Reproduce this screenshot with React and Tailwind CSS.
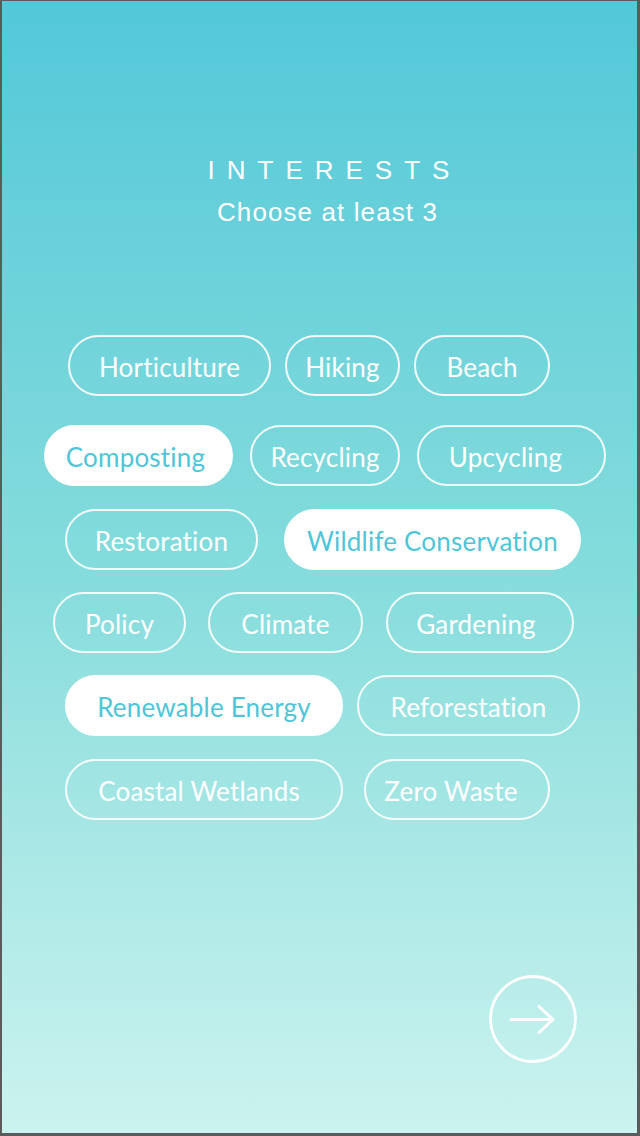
import React, { useState } from 'react';

// one entry per pill: label, left margin, width, selected, optional text nudge
const ROWS = [
  { mt: 'mt-[0px]', pills: [
    { label: 'Horticulture', ml: 'ml-[66px]', w: 'w-[203px]' },
    { label: 'Hiking', ml: 'ml-[14px]', w: 'w-[115px]' },
    { label: 'Beach', ml: 'ml-[14px]', w: 'w-[136px]' },
  ] },
  { mt: 'mt-[29px]', pills: [
    { label: 'Composting', ml: 'ml-[42px]', w: 'w-[189px]', on: true, pad: 'pr-[6px]' },
    { label: 'Recycling', ml: 'ml-[17px]', w: 'w-[150px]' },
    { label: 'Upcycling', ml: 'ml-[17px]', w: 'w-[189px]', pad: 'pr-[12px]' },
  ] },
  { mt: 'mt-[23px]', pills: [
    { label: 'Restoration', ml: 'ml-[63px]', w: 'w-[193px]' },
    { label: 'Wildlife Conservation', ml: 'ml-[26px]', w: 'w-[297px]', on: true },
  ] },
  { mt: 'mt-[22px]', pills: [
    { label: 'Policy', ml: 'ml-[51px]', w: 'w-[133px]' },
    { label: 'Climate', ml: 'ml-[22px]', w: 'w-[155px]' },
    { label: 'Gardening', ml: 'ml-[23px]', w: 'w-[188px]', pad: 'pr-[8px]' },
  ] },
  { mt: 'mt-[22px]', pills: [
    { label: 'Renewable Energy', ml: 'ml-[63px]', w: 'w-[278px]', on: true },
    { label: 'Reforestation', ml: 'ml-[14px]', w: 'w-[223px]' },
  ] },
  { mt: 'mt-[23px]', pills: [
    { label: 'Coastal Wetlands', ml: 'ml-[63px]', w: 'w-[278px]', pad: 'pr-[10px]' },
    { label: 'Zero Waste', ml: 'ml-[21px]', w: 'w-[186px]', pad: 'pr-[12px]' },
  ] },
];

function Pill({ pill, selected, onToggle }) {
  return (
    <button
      onClick={onToggle}
      className={`${pill.ml} ${pill.w} ${pill.pad || ''} h-[61px] pt-[3px] shrink-0 rounded-full border-2 flex items-center justify-center font-['Lato',sans-serif] text-[26px] tracking-[0.2px] ${
        selected ? 'bg-white border-white text-[#4fc5d9]' : 'border-white/90 text-white'
      }`}
    >
      {pill.label}
    </button>
  );
}

export default function App() {
  const [picked, setPicked] = useState(() => {
    const s = {};
    ROWS.forEach(r => r.pills.forEach(p => { if (p.on) s[p.label] = true; }));
    return s;
  });

  const toggle = label => setPicked(s => ({ ...s, [label]: !s[label] }));

  return (
    <div className="w-[640px] h-[1136px] border-t border-l-2 border-r-[3px] border-b-[3px] border-[#5b5b5b] bg-[#5b5b5b]">
      <div className="h-full flex flex-col bg-gradient-to-b from-[#52c8d9] via-[#84dcdc] to-[#cbf3ef]">
        {/* header */}
        <div className="pt-[153px] pl-[16px] flex flex-col items-center text-white font-['Liberation_Sans',Arial,sans-serif]">
          <h1 className="text-[26px] leading-[32px] tracking-[12px] pl-[14px]">INTERESTS</h1>
          <p className="mt-[10px] text-[26px] leading-[32px] tracking-[1.1px]">Choose at least 3</p>
        </div>

        {/* interest pills */}
        <div className="mt-[107px] flex flex-col">
          {ROWS.map((row, i) => (
            <div key={i} className={`${row.mt} flex`}>
              {row.pills.map(p => (
                <Pill key={p.label} pill={p} selected={!!picked[p.label]} onToggle={() => toggle(p.label)} />
              ))}
            </div>
          ))}
        </div>

        <div className="flex-1" />

        {/* next button */}
        <div className="flex justify-end pr-[60px] pb-[70px]">
          <button className="w-[88px] h-[88px]">
            <svg width="88" height="88" viewBox="0 0 88 88" fill="none" stroke="white" strokeLinecap="round" strokeLinejoin="round">
              <circle cx="44" cy="44" r="42.5" strokeWidth="2.8" />
              <path d="M22 44.5H64M50 31.5L64 44.5L50 57.5" strokeWidth="3" />
            </svg>
          </button>
        </div>
      </div>
    </div>
  );
}
